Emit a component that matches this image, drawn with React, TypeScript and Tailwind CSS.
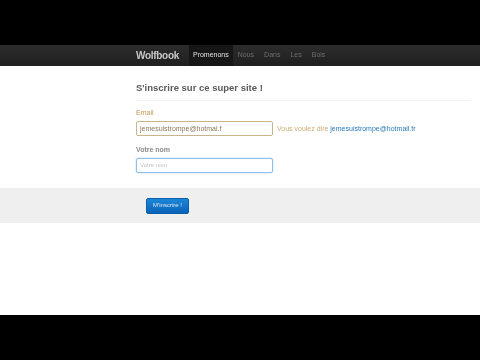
import React from 'react';

const navLinks = ['Nous', 'Dans', 'Les', 'Bois'];

const App: React.FC = () => {
  return (
    <div
      className="flex h-[360px] w-[480px] flex-col overflow-hidden bg-black blur-[0.6px]"
      style={{ fontFamily: '"Liberation Sans", Arial, sans-serif' }}
    >
      {/* letterbox top */}
      <div className="h-[45px] shrink-0 bg-black" />

      {/* navbar */}
      <div className="flex h-[21px] shrink-0 items-stretch bg-gradient-to-b from-[#2c2c2c] to-[#1f1f1f] pl-[136px] shadow-[0_1px_1px_#9a9a9a]">
        <div className="flex items-center pr-[10px] text-[10px] font-bold tracking-[-0.3px] text-[#c8c8c8]">
          Wolfbook
        </div>
        <div className="flex items-center bg-[#161616] px-[4px] text-[7px] text-[#e0e0e0]">
          Promenons
        </div>
        {navLinks.map((l) => (
          <div key={l} className="flex items-center px-[5px] text-[7px] text-[#6e6e6e]">
            {l}
          </div>
        ))}
      </div>

      {/* page */}
      <div className="flex flex-1 flex-col bg-white">
        <div className="pl-[136px] pr-[10px] pt-[15px]">
          <div className="border-b border-[#f1f1f1] pb-[5px] text-[9.5px] font-bold text-[#5a5a5a]">
            S'inscrire sur ce super site !
          </div>

          <div className="mt-[7px] text-[7px] leading-[10px] text-[#c09853]">Email</div>
          <div className="mt-[3px] flex items-center">
            <div className="flex h-[15px] w-[137px] items-center rounded-[2px] border border-[#c9b48c] bg-white px-[3px] text-[7px] text-[#8a7a5a]">
              jemesuistrompe@hotmal.f
            </div>
            <div className="ml-[4px] text-[7px] text-[#c9ac78]">
              Vous voulez dire <span className="text-[#2a7ab8]">jemesuistrompe@hotmail.fr</span>
            </div>
          </div>

          <div className="mt-[9px] text-[7px] font-bold leading-[10px] text-[#8a8a8a]">Votre nom</div>
          <div className="mt-[3px] flex h-[15px] w-[137px] items-center rounded-[2px] border border-[#8fc0e8] bg-white px-[3px] text-[6px] text-[#c4c4c4] shadow-[0_0_2px_#a9d2f2]">
            Votre nom
          </div>
        </div>

        <div className="mt-[15px] flex h-[35px] items-center bg-[#efefef] pl-[146px]">
          <div className="flex h-[16px] w-[43px] items-center justify-center rounded-[2px] border border-[#0b5ea8] bg-gradient-to-b from-[#1b87d8] to-[#0b63b8] text-[6px] text-[#dfeaf5]">
            M'inscrire !
          </div>
        </div>
      </div>

      {/* letterbox bottom */}
      <div className="h-[45px] shrink-0 bg-black" />
    </div>
  );
};

export default App;
